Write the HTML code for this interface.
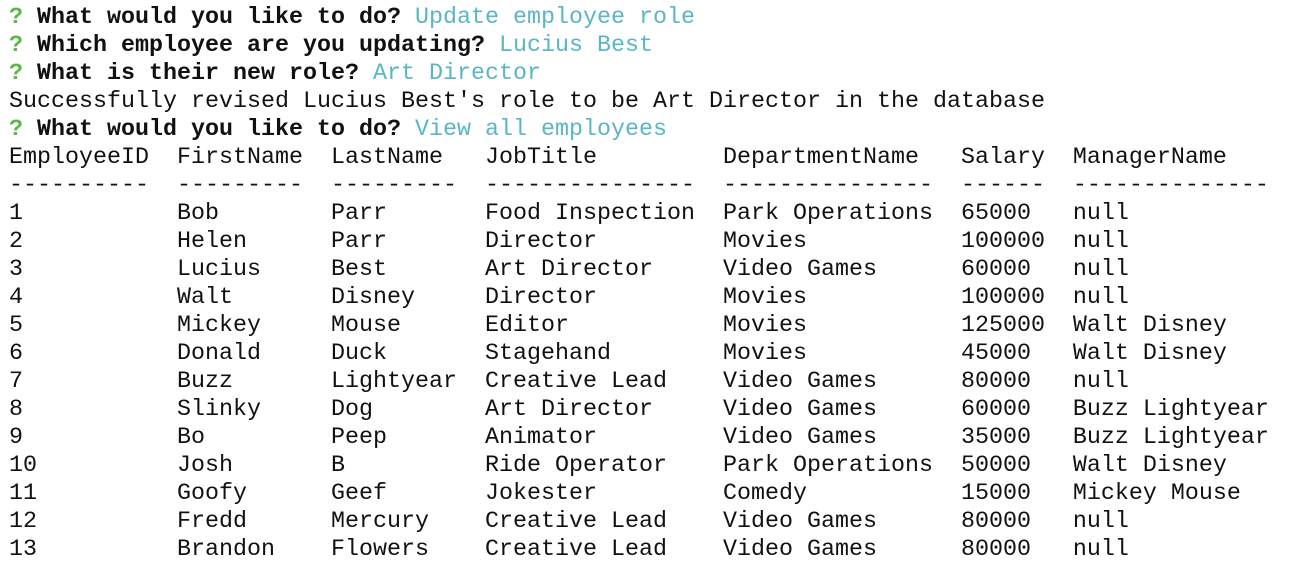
<!DOCTYPE html>
<html><head><style>
body{margin:0;background:#fff;width:1300px;height:578px;overflow:hidden}
pre{margin:0;position:absolute;left:9px;top:4px;font-family:"Liberation Mono",monospace;font-size:23.33px;line-height:28px;color:#111;}
.g{color:#5cb84a;font-weight:bold}.b{font-weight:bold}.c{color:#5ab6c4}
</style></head><body><pre><span class="g">?</span> <span class="b">What would you like to do?</span> <span class="c">Update employee role</span>
<span class="g">?</span> <span class="b">Which employee are you updating?</span> <span class="c">Lucius Best</span>
<span class="g">?</span> <span class="b">What is their new role?</span> <span class="c">Art Director</span>
Successfully revised Lucius Best's role to be Art Director in the database
<span class="g">?</span> <span class="b">What would you like to do?</span> <span class="c">View all employees</span>
EmployeeID  FirstName  LastName   JobTitle         DepartmentName   Salary  ManagerName
----------  ---------  ---------  ---------------  ---------------  ------  --------------
1           Bob        Parr       Food Inspection  Park Operations  65000   null
2           Helen      Parr       Director         Movies           100000  null
3           Lucius     Best       Art Director     Video Games      60000   null
4           Walt       Disney     Director         Movies           100000  null
5           Mickey     Mouse      Editor           Movies           125000  Walt Disney
6           Donald     Duck       Stagehand        Movies           45000   Walt Disney
7           Buzz       Lightyear  Creative Lead    Video Games      80000   null
8           Slinky     Dog        Art Director     Video Games      60000   Buzz Lightyear
9           Bo         Peep       Animator         Video Games      35000   Buzz Lightyear
10          Josh       B          Ride Operator    Park Operations  50000   Walt Disney
11          Goofy      Geef       Jokester         Comedy           15000   Mickey Mouse
12          Fredd      Mercury    Creative Lead    Video Games      80000   null
13          Brandon    Flowers    Creative Lead    Video Games      80000   null</pre></body></html>
